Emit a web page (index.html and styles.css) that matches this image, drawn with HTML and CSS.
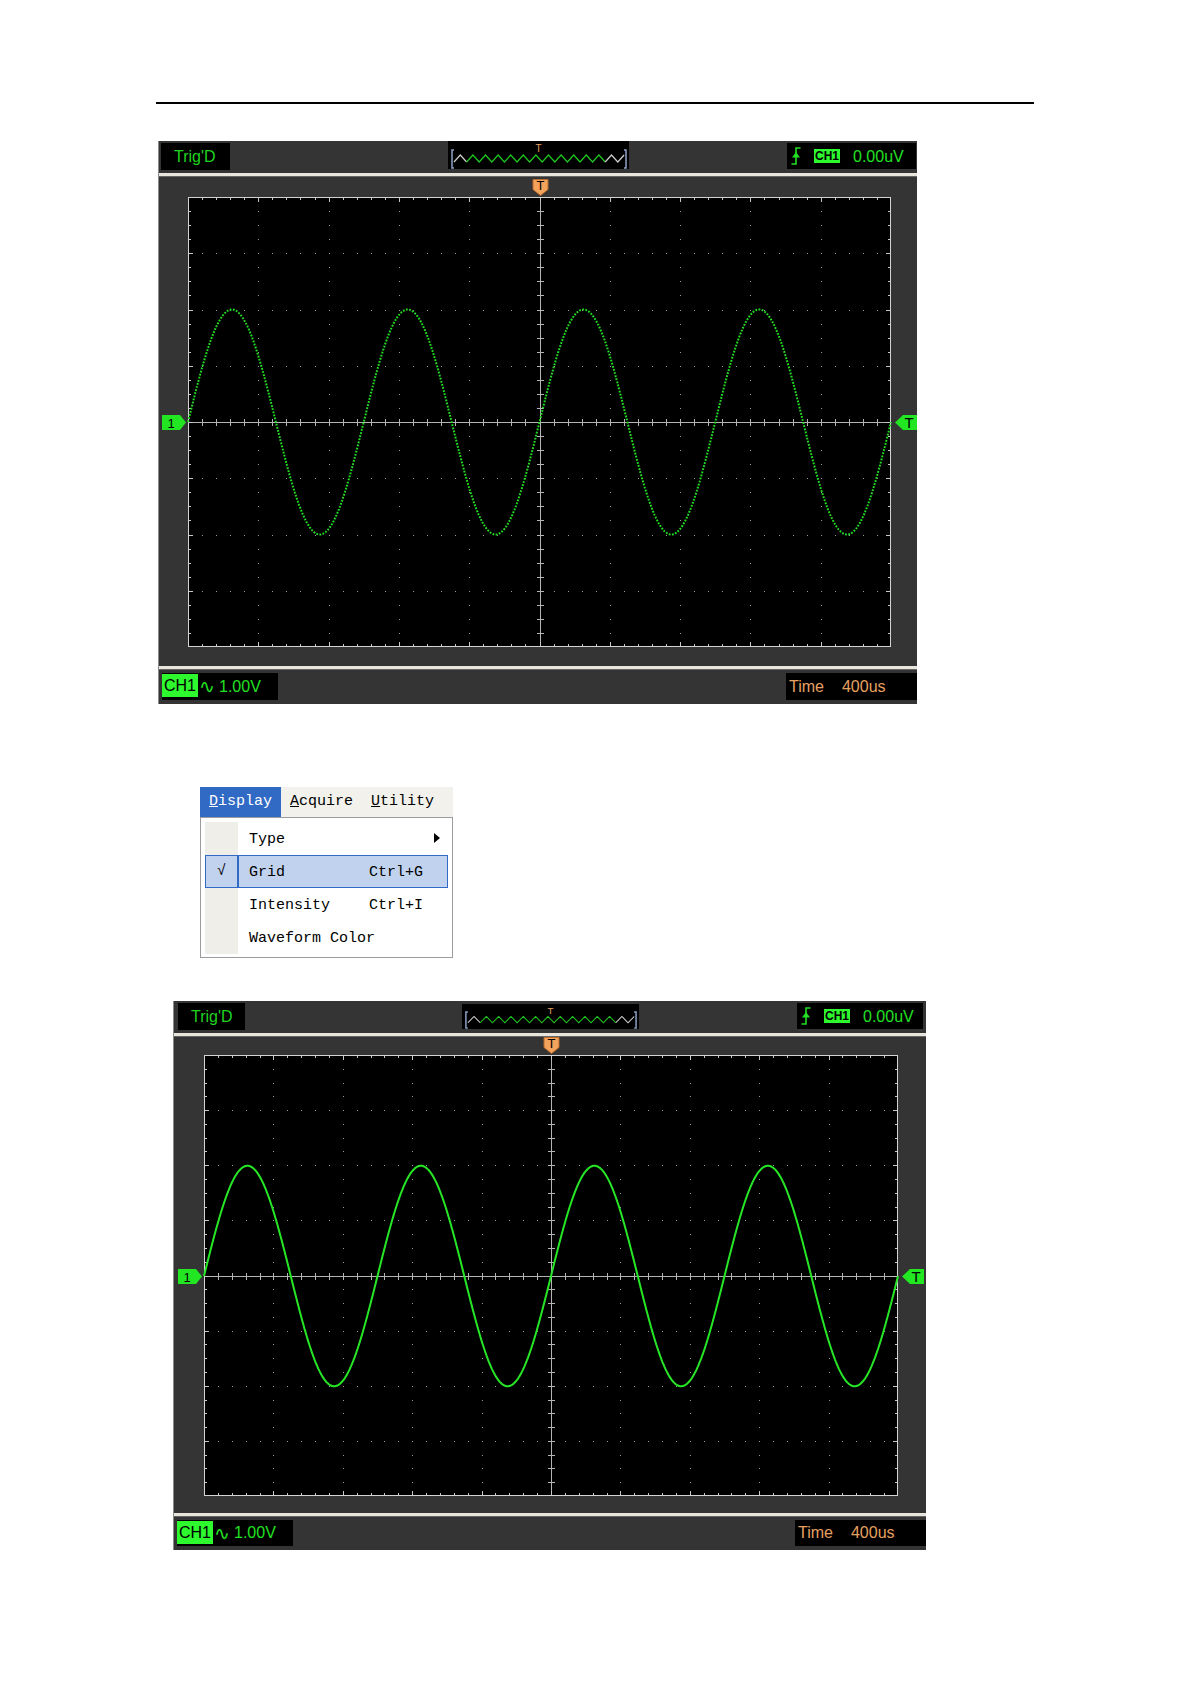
FILE: index.html
```html
<!DOCTYPE html>
<html lang="en">
<head>
    <meta charset="UTF-8">
    <meta name="viewport" content="width=device-width, initial-scale=1.0">
    <title>Display Grid</title>
    <link rel="stylesheet" href="styles.css">
</head>
<body>
    <div class="page">
        <hr class="page-rule">

        <!-- scope window, dots trace -->
        <div class="scope scope-large">
            <div class="scope-top">
                <div class="status-box trig-state">Trig'D</div>
                <svg class="timeline" viewBox="0 0 181 28" preserveAspectRatio="none"></svg>
                <div class="status-box trig-info">
                    <svg class="edge-icon" width="10" height="18" viewBox="0 0 10 18">
                        <path d="M0.5 17H5V1H9.5" fill="none" stroke="#22e022" stroke-width="1.6"/>
                        <polygon points="1,10.5 5,5 9,10.5" fill="#22e022"/>
                    </svg>
                    <span class="ch-tag">CH1</span>
                    <span class="trig-level">0.00uV</span>
                </div>
            </div>
            <div class="scope-sep"></div>
            <svg class="screen" width="758" height="489" data-x="29" data-y="20" data-w="703" data-h="450" data-trace="dots"></svg>
            <div class="scope-sep"></div>
            <div class="scope-bottom">
                <div class="status-box volts"><span class="ch-name">CH1</span><span class="wave-sign">∿</span><span>1.00V</span></div>
                <div class="status-box timebase"><span>Time</span><span class="timebase-value">400us</span></div>
            </div>
        </div>

        <!-- Display menu -->
        <div class="menu">
            <div class="menu-bar">
                <span class="menu-title is-open"><u>D</u>isplay</span>
                <span class="menu-title"><u>A</u>cquire</span>
                <span class="menu-title"><u>U</u>tility</span>
            </div>
            <ul class="menu-list">
                <li class="menu-item">
                    <span class="menu-check"></span>
                    <span class="menu-body"><span class="menu-label">Type</span><span class="menu-arrow"></span></span>
                </li>
                <li class="menu-item is-active">
                    <span class="menu-check">√</span>
                    <span class="menu-body"><span class="menu-label">Grid</span><span>Ctrl+G</span></span>
                </li>
                <li class="menu-item">
                    <span class="menu-check"></span>
                    <span class="menu-body"><span class="menu-label">Intensity</span><span>Ctrl+I</span></span>
                </li>
                <li class="menu-item">
                    <span class="menu-check"></span>
                    <span class="menu-body"><span class="menu-label">Waveform Color</span></span>
                </li>
            </ul>
        </div>

        <!-- scope window, line trace -->
        <div class="scope scope-small">
            <div class="scope-top">
                <div class="status-box trig-state">Trig'D</div>
                <svg class="timeline" viewBox="0 0 181 28" preserveAspectRatio="none"></svg>
                <div class="status-box trig-info">
                    <svg class="edge-icon" width="10" height="18" viewBox="0 0 10 18">
                        <path d="M0.5 17H5V1H9.5" fill="none" stroke="#22e022" stroke-width="1.6"/>
                        <polygon points="1,10.5 5,5 9,10.5" fill="#22e022"/>
                    </svg>
                    <span class="ch-tag">CH1</span>
                    <span class="trig-level">0.00uV</span>
                </div>
            </div>
            <div class="scope-sep"></div>
            <svg class="screen" width="752" height="476" data-x="30" data-y="18" data-w="694" data-h="441" data-trace="line"></svg>
            <div class="scope-sep"></div>
            <div class="scope-bottom">
                <div class="status-box volts"><span class="ch-name">CH1</span><span class="wave-sign">∿</span><span>1.00V</span></div>
                <div class="status-box timebase"><span>Time</span><span class="timebase-value">400us</span></div>
            </div>
        </div>
    </div>
    <script src="script.js"></script>
</body>
</html>
```

FILE: styles.css
```css
* {
    box-sizing: border-box;
}
body {
    margin: 0;
    background: #fff;
    font-family: "Liberation Sans", Arial, sans-serif;
}
.page {
    width: 878px;
    margin-left: 156px;
    padding: 102px 0 60px;
}
.page-rule {
    margin: 0;
    height: 2px;
    border: 0;
    background: #000;
}

/* scope window */
.scope {
    background: #343434;
    border-left: 1px solid #8a8a8a;
    font-size: 16px;
}
.scope-large {
    width: 759px;
    margin: 37px 0 0 2px;
}
.scope-small {
    width: 753px;
    margin: 0 0 0 17px;
}
.scope-top {
    display: grid;
    grid-template-columns: 1fr auto 1fr;
    align-items: start;
    height: 32px;
}
.scope-sep {
    height: 4px;
    background: #e8e6dc;
    border-bottom: 1px solid #666;
}
.screen {
    display: block;
}
.scope-bottom {
    display: flex;
    justify-content: space-between;
    align-items: flex-start;
    height: 34px;
}
.scope-small .scope-bottom {
    height: 33px;
}
.status-box {
    background: #000;
    height: 27px;
    line-height: 27px;
    white-space: nowrap;
}
.trig-state {
    justify-self: start;
    width: 69px;
    margin: 2px 0 0 2px;
    padding-left: 13px;
    color: #1fd41f;
}
.scope-small .trig-state {
    width: 67px;
    margin-left: 4px;
}
.timeline {
    width: 181px;
    height: 28px;
    background: #000;
}
.scope-small .timeline {
    width: 177px;
    height: 25px;
    margin-top: 3px;
}
.trig-info {
    justify-self: end;
    display: flex;
    align-items: center;
    width: 129px;
    height: 26px;
    margin: 2px 1px 0 0;
    padding-left: 4px;
    color: #22e022;
}
.scope-small .trig-info {
    width: 126px;
    margin-right: 3px;
}
.edge-icon {
    display: block;
}
.ch-tag {
    margin-left: 13px;
    width: 26px;
    height: 14px;
    line-height: 14px;
    background: #2ef82e;
    color: #000;
    font-size: 12px;
    font-weight: bold;
    text-align: center;
}
.trig-level {
    margin-left: 13px;
}
.volts {
    display: flex;
    align-items: center;
    width: 116px;
    margin: 3px 0 0 3px;
    color: #22e022;
}
.scope-small .volts {
    height: 26px;
    line-height: 26px;
}
.ch-name {
    width: 36px;
    height: 23px;
    line-height: 23px;
    margin-bottom: 2px;
    padding-left: 2px;
    background: #2ef82e;
    color: #000;
}
.wave-sign {
    width: 21px;
    padding-left: 1px;
    font-family: "DejaVu Sans", sans-serif;
    font-size: 19px;
}
.timebase {
    width: 131px;
    margin-top: 3px;
    padding-left: 3px;
    color: #e8a060;
}
.scope-small .timebase {
    height: 26px;
    line-height: 26px;
}
.timebase-value {
    margin-left: 18px;
}

/* menu */
.menu {
    width: 253px;
    margin: 83px 0 43px 44px;
    font-family: "Liberation Mono", "DejaVu Sans Mono", monospace;
    font-size: 15px;
    color: #000;
    white-space: nowrap;
}
.menu-bar {
    display: flex;
    height: 30px;
    background: #f2f1ec;
}
.menu-title {
    padding: 0 9px;
    line-height: 30px;
}
.menu-title.is-open {
    background: #316ac5;
    color: #fff;
}
.menu-list {
    list-style: none;
    margin: 0;
    padding: 4px 4px 3px;
    border: 1px solid #9c9c9c;
    background: #fff;
}
.menu-item {
    display: flex;
    height: 33px;
}
.menu-check {
    width: 33px;
    background: #efeee8;
    line-height: 33px;
    text-align: center;
}
.menu-body {
    flex: 1;
    display: flex;
    align-items: center;
    padding: 2px 0 0 11px;
}
.menu-label {
    min-width: 120px;
}
.menu-arrow {
    margin: 0 8px 4px auto;
    border-left: 6px solid #000;
    border-top: 5px solid transparent;
    border-bottom: 5px solid transparent;
}
.menu-item.is-active .menu-check,
.menu-item.is-active .menu-body {
    background: #c1d2ee;
    border: 1px solid #316ac5;
}
.menu-item.is-active .menu-check {
    line-height: 31px;
}
.menu-item.is-active .menu-body {
    padding-left: 10px;
}
```

FILE: script.js
```js
const SVG_NS = 'http://www.w3.org/2000/svg';

function add(parent, name, attrs, text) {
    const node = document.createElementNS(SVG_NS, name);
    for (const key in attrs) node.setAttribute(key, attrs[key]);
    if (text) node.textContent = text;
    parent.appendChild(node);
    return node;
}

// memory bar: brackets, zigzag of the record, trigger mark
function drawTimeline(svg) {
    add(svg, 'path', { d: 'M6 9H4V27H6M176 9H178V27H176', fill: 'none', stroke: '#8ea2c8', 'stroke-width': 1.5 });
    const zigzag = (from, to) => {
        const pts = [];
        for (let x = from; x <= to + 0.1; x += 6.3) {
            const up = Math.round((x - 6) / 6.3) % 2 === 1;
            pts.push(x.toFixed(1) + ',' + (up ? 14 : 21));
        }
        return pts.join(' ');
    };
    add(svg, 'polyline', { points: zigzag(6, 18.6), fill: 'none', stroke: '#cfcfcf', 'stroke-width': 1.2 });
    add(svg, 'polyline', { points: zigzag(18.6, 157.2), fill: 'none', stroke: '#1fc81f', 'stroke-width': 1.2 });
    add(svg, 'polyline', { points: zigzag(157.2, 176.1), fill: 'none', stroke: '#cfcfcf', 'stroke-width': 1.2 });
    add(svg, 'text', { x: 90.5, y: 11, fill: '#e8a060', 'font-size': 10, 'text-anchor': 'middle', 'font-family': 'Liberation Sans, sans-serif' }, 'T');
}

function drawScreen(svg) {
    const left = +svg.dataset.x;
    const top = +svg.dataset.y;
    const width = +svg.dataset.w;
    const height = +svg.dataset.h;
    const right = left + width;
    const bottom = top + height;
    const divX = width / 10;
    const divY = height / 8;
    const midX = Math.round(left + width / 2);
    const midY = Math.round(top + height / 2);

    add(svg, 'rect', { x: left, y: top, width: width, height: height, fill: '#000' });

    // dots along every major line, one per minor step
    let dots = '';
    for (let i = 1; i < 10; i++) {
        if (i === 5) continue;
        const x = Math.round(left + i * divX);
        for (let j = 1; j < 32; j++) {
            const y = Math.round(top + j * divY / 4);
            dots += `M${x} ${y + 0.5}h1`;
        }
    }
    for (let j = 1; j < 8; j++) {
        if (j === 4) continue;
        const y = Math.round(top + j * divY);
        for (let i = 1; i < 50; i++) {
            const x = Math.round(left + i * divX / 5);
            dots += `M${x} ${y + 0.5}h1`;
        }
    }
    add(svg, 'path', { d: dots, stroke: '#9a9a9a', 'stroke-width': 1 });

    // centre cross with minor ticks, and ticks on the frame
    let cross = `M${left} ${midY + 0.5}H${right}M${midX + 0.5} ${top}V${bottom}`;
    let ticks = '';
    for (let i = 1; i < 50; i++) {
        const x = Math.round(left + i * divX / 5) + 0.5;
        const len = i % 5 === 0 ? 5 : 3;
        cross += `M${x} ${midY - 3}v7`;
        ticks += `M${x} ${top}v${len}M${x} ${bottom}v${-len}`;
    }
    for (let j = 1; j < 32; j++) {
        const y = Math.round(top + j * divY / 4) + 0.5;
        const len = j % 4 === 0 ? 5 : 3;
        cross += `M${midX - 3} ${y}h7`;
        ticks += `M${left} ${y}h${len}M${right} ${y}h${-len}`;
    }
    add(svg, 'path', { d: cross, stroke: '#b4b4b4', 'stroke-width': 1, fill: 'none' });
    add(svg, 'path', { d: ticks, stroke: '#c8c8c8', 'stroke-width': 1, fill: 'none' });
    add(svg, 'rect', { x: left + 0.5, y: top + 0.5, width: width - 1, height: height - 1, fill: 'none', stroke: '#d4d4d4' });

    // CH1 trace: 2 div amplitude, 2.5 div period
    const period = divX * 2.5;
    const amp = divY * 2;
    const points = [];
    for (let x = 0; x <= width; x += 0.5) {
        const y = midY - amp * Math.sin(2 * Math.PI * x / period);
        points.push((left + x).toFixed(1) + ',' + y.toFixed(1));
    }
    const trace = add(svg, 'polyline', { points: points.join(' '), fill: 'none', stroke: '#26e626', 'stroke-width': 2 });
    if (svg.dataset.trace === 'dots') {
        trace.setAttribute('stroke-dasharray', '1.8 1.4');
        trace.setAttribute('stroke', '#22dc22');
    }

    // channel ground marker on the left
    add(svg, 'path', { d: `M${left - 26} ${midY - 7}h18l6 7.5l-6 7.5h-18z`, fill: '#22e622' });
    add(svg, 'text', { x: left - 17, y: midY + 5.5, fill: '#000', 'font-size': 13, 'text-anchor': 'middle', 'font-family': 'Liberation Sans, sans-serif' }, '1');

    // trigger level marker on the right
    add(svg, 'path', { d: `M${right + 4} ${midY + 0.5}l8 -7.5h14v15h-14z`, fill: '#22e622' });
    add(svg, 'text', { x: right + 18, y: midY + 6, fill: '#000', 'font-size': 15, 'text-anchor': 'middle', 'font-family': 'Liberation Sans, sans-serif' }, 'T');

    // trigger position marker on top
    add(svg, 'path', { d: `M${midX - 7} ${top - 17.5}h15v10l-7.5 6l-7.5 -6z`, fill: '#f4a35c', stroke: '#b86a2c', 'stroke-width': 1 });
    add(svg, 'text', { x: midX + 0.5, y: top - 7, fill: '#000', 'font-size': 13, 'text-anchor': 'middle', 'font-family': 'Liberation Sans, sans-serif' }, 'T');
}

document.querySelectorAll('.timeline').forEach(drawTimeline);
document.querySelectorAll('.screen').forEach(drawScreen);
```
